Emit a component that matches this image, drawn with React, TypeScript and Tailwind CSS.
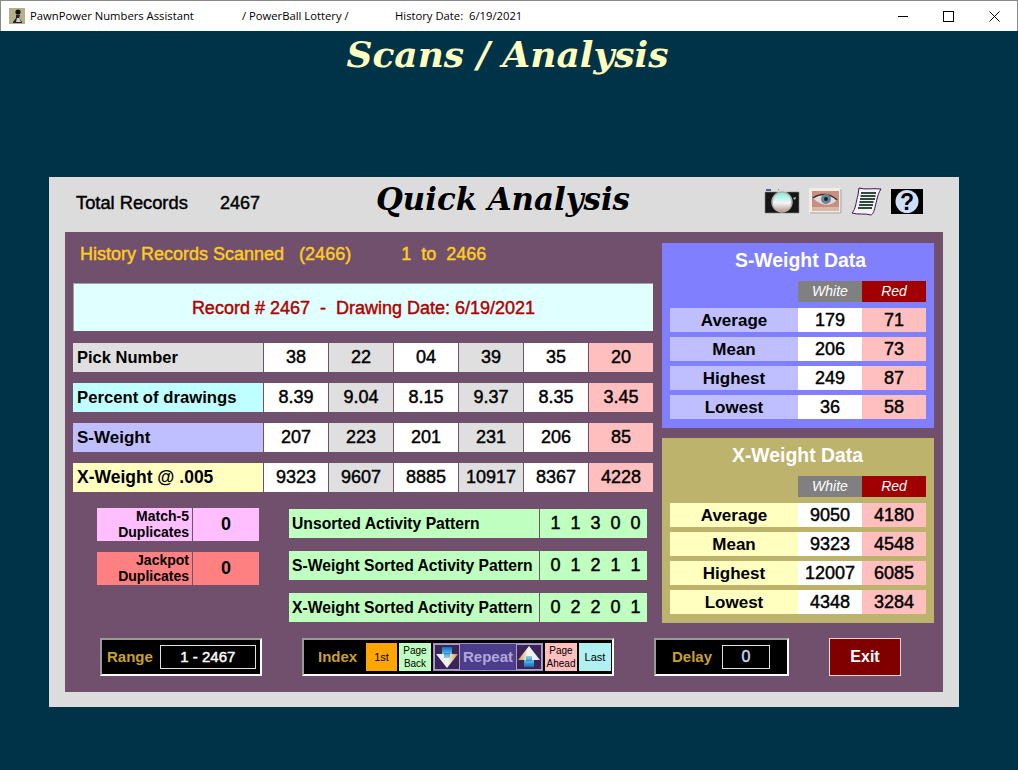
const sans = "font-['Liberation_Sans',Arial,sans-serif]";
// the original's text is a heavy regular weight, a bit between regular and bold
const heavy = "[-webkit-text-stroke:0.45px_currentColor]";

const rows = [
  { label: "Pick Number", bg: "bg-[#dfdfdf]", size: "text-[16.5px]", values: ["38", "22", "04", "39", "35", "20"] },
  { label: "Percent of drawings", bg: "bg-[#bfffff]", size: "text-[16.7px]", values: ["8.39", "9.04", "8.15", "9.37", "8.35", "3.45"] },
  { label: "S-Weight", bg: "bg-[#bfbfff]", size: "text-[17px]", values: ["207", "223", "201", "231", "206", "85"] },
  { label: "X-Weight @ .005", bg: "bg-[#ffffbf]", size: "text-[17.5px]", values: ["9323", "9607", "8885", "10917", "8367", "4228"] },
];

const cellBgs = ["bg-white", "bg-[#dfdfdf]", "bg-white", "bg-[#dfdfdf]", "bg-white", "bg-[#ffbfbf]"];

const sData = [
  ["Average", "179", "71"],
  ["Mean", "206", "73"],
  ["Highest", "249", "87"],
  ["Lowest", "36", "58"],
];

const xData = [
  ["Average", "9050", "4180"],
  ["Mean", "9323", "4548"],
  ["Highest", "12007", "6085"],
  ["Lowest", "4348", "3284"],
];

const patterns = [
  ["Unsorted Activity Pattern", "1  1  3  0  0"],
  ["S-Weight Sorted Activity Pattern", "0  1  2  1  1"],
  ["X-Weight Sorted Activity Pattern", "0  2  2  0  1"],
];

function WeightPanel({ title, bg, labelBg, titleClass, data }: { title: string; bg: string; labelBg: string; titleClass: string; data: string[][] }) {
  return (
    <div className={`${bg} w-[272px] h-[185px] px-2 pt-[1px]`}>
      <div className={`h-[33px] mb-[4px] flex items-center justify-center text-white text-[19.4px] font-bold ${titleClass}`}>{title}</div>
      <div className="flex justify-end h-[21px] text-[14px] italic text-white">
        <div className="w-[64px] bg-[#808080] flex items-center justify-center">White</div>
        <div className="w-[64px] bg-[#a00000] flex items-center justify-center">Red</div>
      </div>
      <div className="flex flex-col gap-[5px] mt-[6px]">
        {data.map((r) => (
          <div key={r[0]} className="flex h-[24px] text-black">
            <div className={`${labelBg} w-[128px] pt-[1px] flex items-center justify-center text-[17px] font-bold`}>{r[0]}</div>
            <div className={`bg-white w-[64px] pt-[1px] flex items-center justify-center text-[18px] ${heavy}`}>{r[1]}</div>
            <div className={`bg-[#ffbfbf] w-[64px] pt-[1px] flex items-center justify-center text-[18px] ${heavy}`}>{r[2]}</div>
          </div>
        ))}
      </div>
    </div>
  );
}

function Arrow({ up }: { up?: boolean }) {
  const id = up ? "arrUp" : "arrDown";
  return (
    <div className="w-[26px] h-[26px] bg-[#3c2458] border border-[#a8a0c8] flex items-center justify-center">
      <svg width="24" height="24" viewBox="0 0 24 24" className={up ? "" : "rotate-180"}>
        <defs>
          <linearGradient id={id} x1="0" y1="0.5" x2="1" y2="0.5">
            <stop offset="0" stopColor="#c09848" />
            <stop offset="0.45" stopColor="#f8f4e8" />
            <stop offset="1" stopColor="#d8ecf8" />
          </linearGradient>
          <linearGradient id={`${id}Stem`} x1="0" y1="0" x2="0" y2="1">
            <stop offset="0" stopColor="#60c0f0" />
            <stop offset="1" stopColor="#1070b8" />
          </linearGradient>
        </defs>
        <path d="M12 1 L23 15 H1 Z" fill={`url(#${id})`} />
        <path d="M7 15 H17 V22 H7 Z" fill={`url(#${id}Stem)`} />
        <path d="M9 11 H15 V16 H9 Z" fill={`url(#${id}Stem)`} opacity="0.7" />
      </svg>
    </div>
  );
}

function SunkenBox({ className, children }: { className: string; children: React.ReactNode }) {
  return (
    <div className={`bg-black h-[38px] border-2 border-t-[#9a9a9a] border-l-[#9a9a9a] border-r-white border-b-white flex items-center ${className}`}>
      {children}
    </div>
  );
}

function Btn({ className, children }: { className: string; children: React.ReactNode }) {
  return (
    <div className={`h-[28px] flex items-center justify-center text-center text-black leading-[13px] font-normal ${className}`}>
      {children}
    </div>
  );
}

export default function App() {
  return (
    <div className={`${sans} w-[1018px] h-[770px] bg-[#003347] overflow-hidden flex flex-col`}>
      {/* title bar */}
      <div className="h-[31px] bg-white border border-b-0 border-[#8a8a8a] flex items-center text-[11.25px] text-black font-['Open_Sans',sans-serif] shrink-0">
        <svg width="16" height="16" viewBox="0 0 16 16" className="ml-[8px]">
          <rect width="16" height="16" fill="#b5b08a" />
          <circle cx="9" cy="4" r="2.6" fill="#111" />
          <path d="M7 7h4l-1 3 3 4v1H4v-1l3-4z" fill="#222" />
          <path d="M8 10h2l2 4H7z" fill="#c8d0e0" />
        </svg>
        <span className="ml-[5px] w-[212px]">PawnPower Numbers Assistant</span>
        <span className="w-[153px]">/ PowerBall Lottery /</span>
        <span>History Date:&nbsp; 6/19/2021</span>
        <div className="ml-auto flex items-center">
          <div className="w-[46px] flex justify-center"><div className="w-[10px] h-[1px] bg-black" /></div>
          <div className="w-[45px] flex justify-center"><div className="w-[11px] h-[11px] border border-black" /></div>
          <div className="w-[46px] flex justify-center">
            <svg width="11" height="11" viewBox="0 0 11 11"><path d="M0.5 0.5L10.500 10.500M10.500 0.500L0.500 10.500" stroke="#000" strokeWidth="1" /></svg>
          </div>
        </div>
      </div>

      <div className="h-[146px] shrink-0 flex justify-center">
        <div className="h-[46px] mr-[3px] flex items-center text-[#ffffbf] text-[36px] font-bold italic font-['DejaVu_Serif',serif]">
          Scans / Analysis
        </div>
      </div>

      {/* grey panel */}
      <div className="ml-[49px] w-[910px] h-[530px] bg-[#dcdcdc] px-[16px] pb-[15px] flex flex-col">
        <div className="h-[55px] flex items-center">
          <span className={`ml-[11px] mb-[3px] w-[144px] text-[18.3px] text-black ${heavy}`}>Total Records</span>
          <span className={`w-[75px] mb-[3px] text-[18px] text-black ${heavy}`}>2467</span>
          <span className="ml-[81px] mb-[10px] text-[30.8px] font-bold italic text-black font-['DejaVu_Serif',serif] whitespace-nowrap">Quick Analysis</span>
          <div className="ml-auto mr-[20px] mb-[7px] flex items-center gap-[9px]">
            <svg width="36" height="26" viewBox="0 0 36 26">
              <defs>
                <linearGradient id="lens" x1="0" y1="0" x2="0" y2="1">
                  <stop offset="0" stopColor="#80f0d0" />
                  <stop offset="0.55" stopColor="#f4f4fc" />
                  <stop offset="1" stopColor="#b89888" />
                </linearGradient>
              </defs>
              <path d="M1 4h34v21H1z" fill="#161616" stroke="#888" strokeWidth="0.6" />
              <path d="M2 2h5M14 2h6" stroke="#203a70" strokeWidth="1.500" />
              <path d="M13 4l2-3h6l2 3z" fill="#d8d8d8" />
              <circle cx="18" cy="14" r="10" fill="url(#lens)" stroke="#b0b0b0" strokeWidth="1.5" />
              <path d="M29 10l3-1-1 3z" fill="#ccc" />
            </svg>
            <svg width="33" height="26" viewBox="0 0 33 26">
              <rect x="0" y="0" width="33" height="26" fill="#f2ece6" />
              <path d="M32 1v24H1" fill="none" stroke="#999" />
              <rect x="3" y="3" width="27" height="20" fill="#c88e80" />
              <path d="M4 10 C11 5 21 5 28 12 C22 19 11 18 4 10z" fill="#dcdce0" />
              <path d="M4 10 C11 5 21 5 28 12" fill="none" stroke="#4a2828" strokeWidth="1.500" />
              <circle cx="17" cy="11" r="5" fill="#6c8498" />
              <circle cx="17" cy="11" r="2" fill="#182028" />
              <rect x="3" y="19" width="27" height="4" fill="#d8b8a8" />
            </svg>
            <svg width="31" height="29" viewBox="0 0 31 29">
              <path d="M8 1 C14 3 22 1 30 2 C26 8 26 14 24 20 C23 25 22 27 20 28 C14 26 7 28 1 26 C5 22 5 14 7 8z" fill="#f4f4f4" stroke="#401060" strokeWidth="1" />
              <path d="M10 6h15M9.500 9h15M9 12h15M8.500 15h14M8 18h14M7 21h14" stroke="#304840" strokeWidth="1.800" />
            </svg>
            <svg width="32" height="25" viewBox="0 0 32 25">
              <rect width="32" height="25" fill="#000" />
              <circle cx="16" cy="12.500" r="11.500" fill="#d0dff8" />
              <text x="16" y="21" textAnchor="middle" fontSize="23" fontWeight="bold" fill="#000" fontFamily="Liberation Sans">?</text>
            </svg>
          </div>
        </div>

        <div className="flex-1 bg-[#70506c] pl-[8px] pr-[9px] flex flex-col">
          <div className="h-[406px] flex gap-[9px]">
            {/* left */}
            <div className="w-[580px] flex flex-col">
              <div className={`h-[44px] flex items-center text-[18px] text-[#ffcc22] whitespace-pre pl-[7px] ${heavy}`}>
                History Records Scanned{"   "}(2466)<span className="ml-[50px]">1{"  "}to{"  "}2466</span>
              </div>
              <div className={`mt-[7px] h-[48px] pt-[1px] bg-[#e0ffff] border-t border-l border-[#a0a0a0] flex items-center justify-center text-[#b00000] text-[18px] whitespace-pre ${heavy}`}>
                Record # 2467{"  "}-{"  "}Drawing Date: 6/19/2021
              </div>
              <div className="mt-[12px] flex flex-col gap-[11px]">
                {rows.map((r) => (
                  <div key={r.label} className="flex gap-[1px] h-[29px] text-black">
                    <div className={`${r.bg} w-[190px] pl-[4px] flex items-center font-bold ${r.size} whitespace-nowrap`}>{r.label}</div>
                    {r.values.map((v, i) => (
                      <div key={i} className={`${cellBgs[i]} w-[64px] flex items-center justify-center text-[18px] ${heavy}`}>{v}</div>
                    ))}
                  </div>
                ))}
              </div>
              <div className="flex mt-[16px]">
                <div className="ml-[24px] w-[162px] flex flex-col gap-[11px] text-black">
                  {[
                    { t: ["Match-5", "Duplicates"], bg: "bg-[#ffbfff]" },
                    { t: ["Jackpot", "Duplicates"], bg: "bg-[#ff8080]" },
                  ].map((d) => (
                    <div key={d.t[0]} className={`${d.bg} h-[33px] flex`}>
                      <div className="w-[96px] border-r border-[#70506c] pr-[3px] text-right text-[14px] leading-[16px] font-bold">
                        <div>{d.t[0]}</div>
                        <div>{d.t[1]}</div>
                      </div>
                      <div className="flex-1 flex items-center justify-center text-[18px] font-bold">0</div>
                    </div>
                  ))}
                </div>
                <div className="ml-[30px] mt-[1px] flex flex-col gap-[13px] text-black">
                  {patterns.map((p) => (
                    <div key={p[0]} className="flex h-[29px] gap-[1px]">
                      <div className="w-[250px] bg-[#bfffbf] pl-[3px] flex items-center text-[15.7px] font-bold whitespace-nowrap">{p[0]}</div>
                      <div className={`w-[107px] pl-[4px] bg-[#bfffbf] flex items-center justify-center text-[18px] whitespace-pre ${heavy}`}>{p[1]}</div>
                    </div>
                  ))}
                </div>
              </div>
            </div>

            {/* right */}
            <div className="mt-[11px] flex flex-col gap-[10px]">
              <WeightPanel title="S-Weight Data" bg="bg-[#8080ff]" labelBg="bg-[#bfbfff]" titleClass="pl-[5px]" data={sData} />
              <WeightPanel title="X-Weight Data" bg="bg-[#bdb36c]" labelBg="bg-[#ffffbf]" titleClass="pr-[1px]" data={xData} />
            </div>
          </div>

          {/* bottom bar */}
          <div className="ml-[27px] flex items-center">
            <SunkenBox className="w-[162px] pl-[5px] gap-[7px]">
              <span className="text-[15px] font-bold text-[#c8a030]">Range</span>
              <div className={`w-[96px] h-[24px] border border-[#e0e0e0] flex items-center justify-center text-white text-[15px] ${heavy}`}>1 - 2467</div>
            </SunkenBox>
            <SunkenBox className="ml-[40px] w-[312px] pl-[14px]">
              <span className="w-[48px] text-[15px] font-bold text-[#c8a030]">Index</span>
              <Btn className="w-[31px] bg-[#ffa500] text-[11px]">1st</Btn>
              <Btn className="ml-[2px] w-[32px] bg-[#bfffbf] text-[10px]">Page<br />Back</Btn>
              <div className="ml-[2px] w-[110px] h-[28px] bg-[#4c3c8c] border border-[#9a90c0] flex items-center justify-between">
                <Arrow />
                <span className="text-[15px] font-bold text-[#b0a8d8]">Repeat</span>
                <Arrow up />
              </div>
              <Btn className="ml-[2px] w-[32px] bg-[#ffbfbf] text-[10px]">Page<br />Ahead</Btn>
              <Btn className="ml-[2px] w-[32px] bg-[#b0f0f0] text-[11px]">Last</Btn>
            </SunkenBox>
            <SunkenBox className="ml-[40px] w-[135px] pl-[16px] gap-[10px]">
              <span className="text-[15px] font-bold text-[#c8a030]">Delay</span>
              <div className={`w-[48px] h-[24px] border border-[#e0e0e0] flex items-center justify-center text-[#c8d8f0] text-[16px] ${heavy}`}>0</div>
            </SunkenBox>
            <div className="ml-[40px] w-[72px] h-[38px] bg-[#800000] border border-[#e8d8d8] flex items-center justify-center text-white text-[16px] font-bold">Exit</div>
          </div>
        </div>
      </div>
    </div>
  );
}
